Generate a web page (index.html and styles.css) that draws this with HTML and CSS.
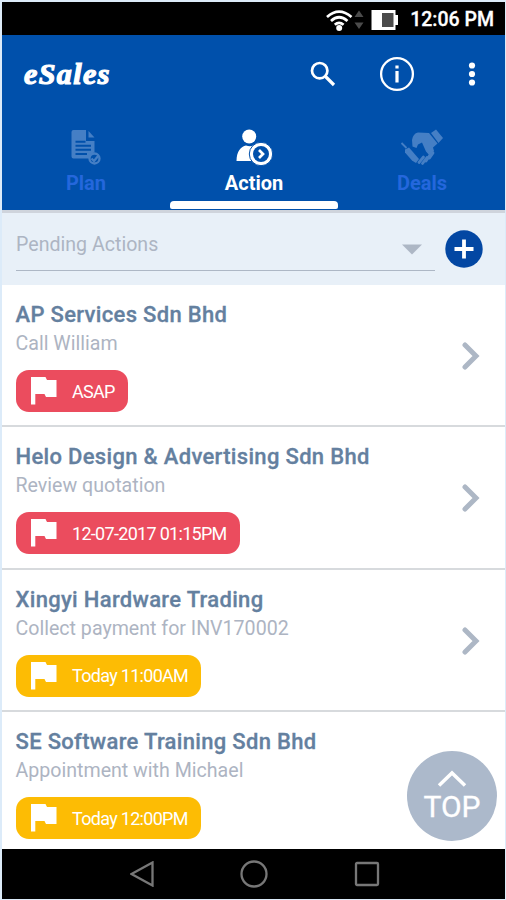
FILE: index.html
```html
<!DOCTYPE html>
<html lang="en">
<head>
<meta charset="utf-8">
<title>eSales</title>
<link rel="stylesheet" href="styles.css">
</head>
<body>
<svg class="defs" width="0" height="0" aria-hidden="true">
  <symbol id="flag" viewBox="0 0 26 28"><path d="M0 0H14.5L16 3H25.5V20H15L13.500 17H4.300V27.500H0Z" fill="currentColor"/></symbol>
  <symbol id="chevron" viewBox="0 0 18 28"><path d="M3 3L14 14L3 25" fill="none" stroke="currentColor" stroke-width="5" stroke-linecap="round" stroke-linejoin="miter"/></symbol>
</svg>
<div class="screen">
  <div class="status">
    <svg width="72" height="24" viewBox="0 0 72 24">
      <g fill="none" stroke="#fff" stroke-width="2.700">
        <path d="M1 9Q13-1.800 25.500 9"/><path d="M5 13Q13 5.500 21.500 13"/><path d="M8.800 16.800Q13 13 17.600 16.800"/>
      </g>
      <circle cx="13.200" cy="20" r="3" fill="#fff"/>
      <path d="M28.500 9L33 2.500L37.500 9ZM28.500 14.500H37.500L33 21Z" fill="#4b4b4b"/>
      <path d="M45.500 2H69.500V7H72.500V17H69.500V22H45.500Z" fill="#fff"/>
      <path d="M56 5H67.500V19H56Z" fill="#4b4b4b"/>
    </svg>
    <span class="clock">12:06 PM</span>
  </div>
  <header class="header">
    <div class="bar">
      <h1 class="logo">eSales</h1>
      <svg class="search" width="26" height="26" viewBox="0 0 26 26" fill="none" stroke="#fff"><circle cx="9.700" cy="9.700" r="7.700" stroke-width="2.700"/><path d="M15.500 15.500L24 24" stroke-width="3.200"/></svg>
      <svg class="info" width="36" height="36" viewBox="0 0 36 36"><circle cx="18" cy="18" r="15.900" fill="none" stroke="#fff" stroke-width="2.300"/><path d="M16.400 9.500H19.600V12.500H16.400ZM16.400 15H19.600V26.500H16.400Z" fill="#fff"/></svg>
      <svg class="more" width="8" height="26" viewBox="0 0 8 26" fill="#fff"><circle cx="4" cy="4.500" r="3.100"/><circle cx="4" cy="13" r="3.100"/><circle cx="4" cy="21.500" r="3.100"/></svg>
    </div>
    <nav class="tabs">
      <div class="tab">
        <svg width="36" height="38" viewBox="0 0 36 38">
          <path d="M5.500 2H18V13H26.500V24.500Q23 25 21.500 30.500H5.500Q3.500 30.500 3.500 28.500V4Q3.500 2 5.500 2Z" fill="#457fc5"/>
          <path d="M20.500 3L26.500 9.500H20.500Z" fill="#457fc5"/>
          <path d="M7.500 13.700H17.500M7.500 17.800H23M7.500 21.800H23M7.500 26H19" stroke="#0050ab" stroke-width="1.900"/>
          <circle cx="26.500" cy="30.500" r="5" fill="#0050ab" stroke="#457fc5" stroke-width="2.300"/>
          <path d="M23.500 30.500L26 33L30.500 27.500" fill="none" stroke="#457fc5" stroke-width="2.300"/>
        </svg>
        <span>Plan</span>
      </div>
      <div class="tab active">
        <svg width="38" height="38" viewBox="0 0 38 38">
          <circle cx="14.200" cy="8.500" r="7" fill="#fff"/>
          <path d="M1.500 33C1.500 23 6 18.500 11 17.500Q15 19 18.500 17.500L22 19V33Z" fill="#fff"/>
          <circle cx="26" cy="26" r="11.700" fill="#fff" stroke="#0050ab" stroke-width="1"/>
          <circle cx="26" cy="26" r="8" fill="#0050ab"/>
          <path d="M24 22L28 26L24 30" fill="none" stroke="#fff" stroke-width="2.700"/>
        </svg>
        <span>Action</span>
      </div>
      <div class="tab">
        <svg width="44" height="38" viewBox="0 0 44 38" fill="#457fc5">
          <path d="M1.500 15L6.500 20" stroke="#457fc5" stroke-width="1.800"/>
          <path d="M5 21.500L9 19.500L19 31L16 35L12 32.500L5 24.500Z"/>
          <path d="M12 12Q13 5.500 18 4.500L29 5L37.500 15.500L33 19.500L34 23L30 28L26 23.500L22 14.500L18 16.500L16.500 20L12.500 18.500Z"/>
          <path d="M31 5L36 1.500L43 10L38.500 15Z"/>
          <path d="M19 34.500L23.500 29M22.500 35.500L27 29.500M26 33L30 27M29.500 30L33 25" stroke="#457fc5" stroke-width="2.800" stroke-linecap="round"/>
        </svg>
        <span>Deals</span>
      </div>
    </nav>
  </header>
  <div class="filter">
    <div class="select"><span>Pending Actions</span><svg width="20" height="11" viewBox="0 0 20 11"><path d="M0 .5H20L10 10.500Z" fill="#adb7c5"/></svg></div>
    <svg class="add" width="38" height="38" viewBox="0 0 38 38"><circle cx="19" cy="19" r="18.700" fill="#0347a3"/><path d="M9.500 19H28.500M19 9.500V28.500" stroke="#fff" stroke-width="3.800"/></svg>
  </div>
  <main class="list">
    <article class="row">
      <div class="body"><h2>AP Services Sdn Bhd</h2><p>Call William</p><div class="chip red"><svg width="26" height="28"><use href="#flag"/></svg><span>ASAP</span></div></div>
      <svg class="go" width="18" height="28"><use href="#chevron"/></svg>
    </article>
    <article class="row">
      <div class="body"><h2>Helo Design &amp; Advertising Sdn Bhd</h2><p>Review quotation</p><div class="chip red"><svg width="26" height="28"><use href="#flag"/></svg><span>12-07-2017 01:15PM</span></div></div>
      <svg class="go" width="18" height="28"><use href="#chevron"/></svg>
    </article>
    <article class="row">
      <div class="body"><h2>Xingyi Hardware Trading</h2><p>Collect payment for INV170002</p><div class="chip amber"><svg width="26" height="28"><use href="#flag"/></svg><span>Today 11:00AM</span></div></div>
      <svg class="go" width="18" height="28"><use href="#chevron"/></svg>
    </article>
    <article class="row">
      <div class="body"><h2>SE Software Training Sdn Bhd</h2><p>Appointment with Michael</p><div class="chip amber"><svg width="26" height="28"><use href="#flag"/></svg><span>Today 12:00PM</span></div></div>
    </article>
    <div class="top">
      <svg width="30" height="18" viewBox="0 0 30 18"><path d="M2 15.500L15 3L28 15.500" fill="none" stroke="#fff" stroke-width="3.500"/></svg>
      <span>TOP</span>
    </div>
  </main>
  <footer class="nav">
    <svg width="24" height="26" viewBox="0 0 24 26"><path d="M1.500 13L22.500 1.500V24.500Z"/></svg>
    <svg width="28" height="28" viewBox="0 0 28 28"><circle cx="14" cy="14" r="12.500"/></svg>
    <svg width="26" height="26" viewBox="0 0 26 26"><rect x="2" y="2" width="22" height="22" rx="1"/></svg>
  </footer>
</div>
</body>
</html>
```
FILE: styles.css
```css
* { box-sizing: border-box; }
body {
  margin: 0;
  padding: 2px 1px 1px 2px;
  height: 900px;
  overflow: hidden;
  background: #dcebf9;
  font-family: Roboto, "Liberation Sans", sans-serif;
}
.defs { display: none; }
svg { display: block; flex: none; }
h1, h2, p { margin: 0; white-space: nowrap; }
.screen {
  height: 897px;
  display: flex;
  flex-direction: column;
  background: #fff;
}
.status {
  height: 33px;
  flex: none;
  display: flex;
  align-items: center;
  justify-content: flex-end;
  gap: 12px;
  padding: 2px 11px 0 0;
  background: #000;
  color: #fff;
}
.clock { padding-top: 1px; font-size: 19.500px; font-weight: 500; line-height: 24px; white-space: nowrap; -webkit-text-stroke: 0.3px #fff; }
.header {
  height: 175px;
  flex: none;
  background: #0050ab;
}
.bar { height: 78px; display: flex; align-items: center; padding-left: 22px; }
.logo {
  flex: 1;
  color: #fff;
  font: italic 700 30px/40px "Liberation Serif", serif;
  letter-spacing: 1.400px;
  -webkit-text-stroke: 1.200px #fff;
}
.search { margin-right: 43px; }
.info { margin-right: 53px; }
.more { margin-right: 29px; }
.tabs { height: 97px; display: flex; }
.tab {
  flex: 1;
  display: flex;
  flex-direction: column;
  align-items: center;
  padding: 15px 0 0 1px;
  color: #2467dc;
  font-size: 20px;
  font-weight: 700;
  line-height: 34px;
}
.active { color: #fff; }
.active::after {
  content: "";
  width: 168px;
  height: 8px;
  margin-top: 1px;
  background: #fff;
  border-radius: 4px 4px 2px 2px;
}
.filter {
  height: 75px;
  flex: none;
  display: flex;
  align-items: center;
  border-top: 3px solid #cfd4dc;
  background: #e8f0f8;
  padding: 0 22px 0 14px;
}
.select {
  flex: 1;
  height: 58px;
  margin: -14px 10px 0 0;
  display: flex;
  align-items: center;
  justify-content: space-between;
  padding: 0 13px 0 0;
  border-bottom: 1.500px solid #adb7c5;
  color: #adb5c3;
  font-size: 19.600px;
}
.select span { margin-top: 5px; }
.select svg { margin-top: 16px; }
.list {
  position: relative;
  flex: 1;
  overflow: hidden;
}
.row {
  height: 142.300px;
  display: flex;
  align-items: center;
  justify-content: space-between;
  padding: 0 25px 0 13.500px;
  border-bottom: 2px solid #d7dadd;
}
.row:nth-child(4) { border-color: transparent; }
.body { height: 126px; padding-top: 7px; }
.row h2 { color: #64809f; font-size: 22px; font-weight: 500; line-height: 31px; letter-spacing: 0.320px; -webkit-text-stroke: 0.3px #64809f; }
.row p { padding-top: 1px; color: #adb4c2; font-size: 19.600px; line-height: 26px; }
.chip {
  display: inline-flex;
  align-items: center;
  height: 42px;
  margin-top: 13px;
  padding: 0 13px 0 15.500px;
  gap: 15px;
  border-radius: 13px;
  color: #fff;
  font-size: 18px;
  letter-spacing: -0.700px;
  white-space: nowrap;
}
.red { background: #eb4c5e; }
.amber { background: #fdbc04; }
.go { margin-top: 2px; color: #adb7c5; }
.top {
  position: absolute;
  right: 8px;
  bottom: 8px;
  width: 90px;
  height: 90px;
  border-radius: 50%;
  background: #acb9cb;
  color: #fff;
  display: flex;
  flex-direction: column;
  align-items: center;
  padding-top: 19px;
  font-size: 30px;
  line-height: 38px;
  -webkit-text-stroke: 0.3px #fff;
}
.nav {
  height: 50px;
  flex: none;
  display: flex;
  align-items: center;
  justify-content: center;
  gap: 86px;
  padding-left: 2px;
  background: #000;
}
.nav svg { fill: none; stroke: #777; stroke-width: 2.300; }
```
